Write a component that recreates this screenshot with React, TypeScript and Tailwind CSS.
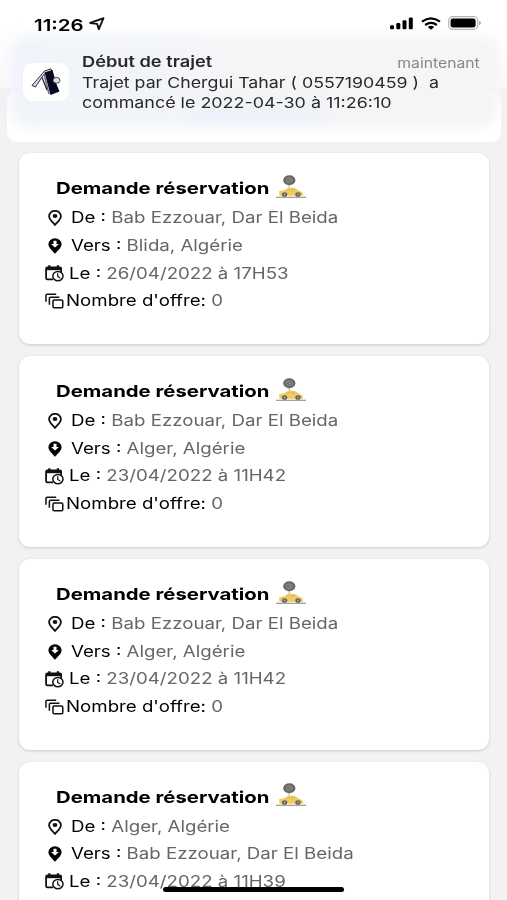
import clsx from 'clsx';

interface Reservation {
  id: number;
  from: string;
  to: string;
  date: string;
  offers?: number;
}

const reservations: Reservation[] = [
  { id: 1, from: 'Bab Ezzouar, Dar El Beida', to: 'Blida, Algérie', date: '26/04/2022 à 17H53', offers: 0 },
  { id: 2, from: 'Bab Ezzouar, Dar El Beida', to: 'Alger, Algérie', date: '23/04/2022 à 11H42', offers: 0 },
  { id: 3, from: 'Bab Ezzouar, Dar El Beida', to: 'Alger, Algérie', date: '23/04/2022 à 11H42', offers: 0 },
  { id: 4, from: 'Alger, Algérie', to: 'Bab Ezzouar, Dar El Beida', date: '23/04/2022 à 11H39' },
];

const PinIcon = () => (
  <svg viewBox="0 0 14 16" className="w-[14px] h-4" fill="none" stroke="#111">
    <path d="M7 15C4.6 12 1.1 9.400 1.100 6.200A5.900 5.400 0 0 1 12.900 6.200C12.900 9.400 9.400 12 7 15Z" strokeWidth="1.8" strokeLinejoin="round" />
    <ellipse cx="7" cy="6.100" rx="2.400" ry="2" fill="#111" stroke="none" />
  </svg>
);

const PinDownIcon = () => (
  <svg viewBox="0 0 14 16" className="w-[14px] h-4">
    <path d="M7 15.800C4.600 12.600.4 9.800.4 6.200A6.600 6 0 0 1 13.600 6.200C13.600 9.800 9.400 12.600 7 15.800Z" fill="#000" />
    <path d="M5.500 2.800h3v3.200h2.400L7 9.600 3.100 6h2.400Z" fill="#fff" />
  </svg>
);

const CalendarClockIcon = () => (
  <svg viewBox="0 0 19 17" className="w-[19px] h-[17px]" fill="none" stroke="#111">
    <path d="M8 14.400H2.500Q1.100 14.400 1.100 13.100V3.500Q1.100 2.400 2.500 2.400H14.700Q16.100 2.400 16.100 3.500V7" strokeWidth="1.800" />
    <path d="M1 2.500H16.600V5.200H1Z" fill="#111" stroke="none" />
    <path d="M4.300.3V3M12.900.3V3" strokeWidth="2.200" />
    <ellipse cx="12.900" cy="11.100" rx="5.100" ry="4.700" fill="#fff" strokeWidth="1.500" />
    <path d="M12.700 8.200V11.400L15.200 12.900" strokeWidth="1.200" />
  </svg>
);

const StackIcon = () => (
  <svg viewBox="0 0 20 16" className="w-5 h-4" fill="none" stroke="#111" strokeWidth="1.600">
    <path d="M1 8.800V2.200Q1 1 2.400 1H11.800" />
    <path d="M4.600 12V5.200Q4.600 4 6 4H15.200" />
    <rect x="8.400" y="7" width="10.300" height="8" rx="1.300" />
  </svg>
);

const TaxiIcon = () => (
  <svg viewBox="0 0 30 24" className="w-[30px] h-6 shrink-0">
    <path d="M13.300 9v5" stroke="#d9c68a" strokeWidth="1.500" />
    <ellipse cx="13.300" cy="5.200" rx="6.100" ry="5" fill="#686868" />
    <ellipse cx="13.300" cy="5.200" rx="3" ry="2.300" fill="none" stroke="#949494" strokeWidth="1" />
    <path d="M12.500 5.200h2.500" stroke="#a8a8a8" strokeWidth=".8" />
    <rect y="21.700" width="30" height="1.300" fill="#a0a0a0" />
    <path d="M3 16.300 8.500 15.200Q10.500 12.700 14 12.700H17Q20 12.800 22.500 15.500L26.500 17.200 27.200 20.800H3.500Z" fill="#f1cc5c" />
    <path d="M10 15.300Q11.500 13.600 13.600 13.600V15.600ZM15 13.600Q18 13.500 20 15.800L15 15.600Z" fill="#d9bd70" />
    <ellipse cx="8.600" cy="19.500" rx="2.700" ry="2.300" fill="#67655a" />
    <ellipse cx="22" cy="19.500" rx="2.700" ry="2.300" fill="#67655a" />
    <circle cx="8.600" cy="19.500" r=".9" fill="#aaa" />
    <circle cx="22" cy="19.500" r=".9" fill="#aaa" />
  </svg>
);

const AppLogo = () => (
  <svg viewBox="0 0 30 28" className="w-[30px] h-7">
    <path d="M1 17.500 13.500 3 20 .8 21 3.500 14 5.500 11 9 4.500 19Z" fill="#d8d9df" stroke="#303038" strokeWidth="1" strokeLinejoin="round" />
    <path d="M13.500 4.500 21.500 2 23.500 9 25 15 28.500 23.500 19.500 27Z" fill="#080820" />
    <path d="M13 6 18 26" stroke="#6d6f7c" strokeWidth="1.500" />
    <path d="M11 9.500 16 22" stroke="#1c1c2a" strokeWidth="1.200" />
    <ellipse cx="25.500" cy="12.300" rx="3.500" ry="2.900" fill="#dfe1e8" stroke="#444754" strokeWidth="1" />
  </svg>
);

const Row: React.FC<{ icon: React.ReactNode; label: string; value: string | number; textClass: string }> = ({
  icon,
  label,
  value,
  textClass,
}) => (
  <div className="flex h-[27.6px] items-center">
    <span className="flex w-[19px] shrink-0 justify-center">{icon}</span>
    <span
      className={clsx(
        'inline-block origin-left scale-x-[1.205] whitespace-pre text-[15.5px] leading-5',
        textClass
      )}
    >
      {label} <span className="text-[#666]">{value}</span>
    </span>
  </div>
);

const ReservationCard: React.FC<{ item: Reservation }> = ({ item }) => (
  <article className="h-[190.7px] shrink-0 rounded-[11px] bg-white pl-[26px] pt-[20px] shadow-[0_1px_3px_rgba(0,0,0,0.16)]">
    <div className="flex h-[31.3px] items-center pl-[11px]">
      <h2 className="-mt-px w-[220px] shrink-0 whitespace-nowrap">
        <span className="inline-block origin-left scale-x-[1.232] text-[16.5px] font-bold leading-5 text-black">
          Demande réservation
        </span>
      </h2>
      <div className="-mt-1">
        <TaxiIcon />
      </div>
    </div>
    <Row icon={<PinIcon />} label="De :" value={item.from} textClass="ml-[7px]" />
    <Row icon={<PinDownIcon />} label="Vers :" value={item.to} textClass="ml-[7px]" />
    <Row icon={<CalendarClockIcon />} label="Le :" value={item.date} textClass="ml-[5px]" />
    {item.offers !== undefined && (
      <Row icon={<StackIcon />} label="Nombre d'offre:" value={item.offers} textClass="ml-[2px]" />
    )}
  </article>
);

const StatusBar = () => (
  <div className="flex h-[38px] items-start justify-between pl-[34px] pr-[26px] pt-[12.500px]">
    <div className="flex items-center">
      <span className="w-[55px]">
        <span className="inline-block origin-left scale-x-[1.24] text-[16.5px] font-semibold leading-5">11:26</span>
      </span>
      <svg viewBox="0 0 16 14" className="-mt-px h-[14px] w-4">
        <path d="M1.200 6 14.500 1.200 9.800 12.200 8.200 6.900Z" fill="none" stroke="#111" strokeWidth="1.9" strokeLinejoin="round" />
      </svg>
    </div>
    <div className="flex h-[21px] items-center">
      <svg viewBox="0 0 24 13" className="h-[13px] w-6" fill="#000">
        <rect x="0" y="8.300" width="4" height="4" rx="1.200" />
        <rect x="6.300" y="6" width="4" height="6.300" rx="1.200" />
        <rect x="12.500" y="3.300" width="4" height="9" rx="1.200" />
        <rect x="18.800" y=".5" width="4" height="11.800" rx="1.200" />
      </svg>
      <svg viewBox="0 0 20 13" className="ml-[7px] h-[13px] w-5" fill="none" stroke="#000" strokeWidth="2.200">
        <path d="M1 4.600Q10-2 19 4.600M4.200 8Q10 3.600 15.800 8" />
        <path d="M6.800 10Q10 7.600 13.200 10L10 12.700Z" fill="#000" stroke="none" />
      </svg>
      <svg viewBox="0 0 33 14" className="ml-[7px] h-[14px] w-[33px]">
        <rect x=".7" y=".7" width="29" height="12.600" rx="3.800" fill="#fff" stroke="#b4b4b4" strokeWidth="1.200" />
        <rect x="2.600" y="2.500" width="25" height="9" rx="2.300" fill="#000" />
        <path d="M31 4.800Q33 5.500 33 7T31 9.200Z" fill="#aaa" />
      </svg>
    </div>
  </div>
);

const Notification = () => (
  <div className="flex h-[104px] pl-[23px] pr-[27px] pt-[14px]">
    <div className="mt-[11px] flex h-[38px] w-[46px] shrink-0 items-center justify-center rounded-[10px] bg-white">
      <AppLogo />
    </div>
    <div className="ml-[13px] min-w-0 flex-1 text-[#29292c]">
      <div className="flex h-[21px] items-center justify-between">
        <span className="-mt-px inline-block origin-left scale-x-[1.215] text-[15px] font-semibold leading-5">
          Début de trajet
        </span>
        <span className="mt-px inline-block origin-right scale-x-[1.165] text-[13.5px] leading-5 text-[#858689]">
          maintenant
        </span>
      </div>
      <p className="w-max origin-left scale-x-[1.184] whitespace-pre text-[15px] leading-5">
        {'Trajet par Chergui Tahar ( 0557190459 )  a'}
      </p>
      <p className="w-max origin-left scale-x-[1.193] whitespace-pre text-[15px] leading-5">
        commancé le 2022-04-30 à 11:26:10
      </p>
    </div>
  </div>
);

const App: React.FC = () => {
  return (
    <div className="relative h-[900px] w-[507px] overflow-hidden bg-[#f2f2f2] font-['Inter',sans-serif] text-black">
      <header className="relative h-[142px]">
        <div className="absolute inset-x-0 top-0 h-[88px] bg-linear-to-b from-white from-30% to-[#fafafa]" />
        <div className="absolute bottom-0 left-[7px] right-[6px] h-[50px] rounded-[10px] bg-white" />
        <div className="absolute bottom-[14px] left-[10px] right-[9px] top-[35px] rounded-[20px] bg-linear-to-r from-[#f0f4fa] via-[#f4f5f7] to-[#f5f5f5] blur-[6px]" />
        <div className="absolute left-[190px] top-[108px] h-[12px] w-[130px] bg-[#e9f1fc] blur-[7px]" />
        <div className="relative">
          <StatusBar />
          <Notification />
        </div>
      </header>
      <main className="mt-[11.3px] flex flex-col gap-[12.1px] pl-[19px] pr-[18px]">
        {reservations.map((item) => (
          <ReservationCard key={item.id} item={item} />
        ))}
      </main>
      <div className="absolute bottom-[8px] left-[163px] h-[5px] w-[181px] rounded-full bg-black" />
    </div>
  );
};

export default App;
